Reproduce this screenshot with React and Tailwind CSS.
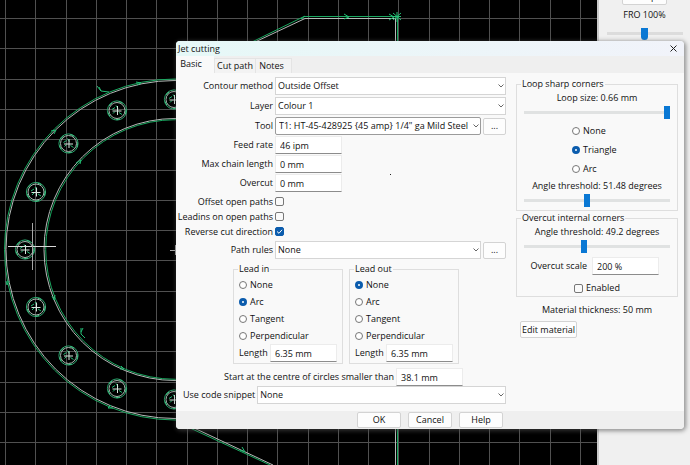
import React from 'react';
import clsx from 'clsx';

const GRID_X = Array.from({ length: 20 }, (_, i) => 5.7 + i * 30.25);
const GRID_Y = Array.from({ length: 15 }, (_, i) => 18.5 + i * 30.3);

const HOLES = [
  [174, 99.5],
  [117, 110.5],
  [68.5, 143.5],
  [36, 192],
  [25, 249.5],
  [36, 307],
  [68.5, 355.5],
  [117, 388.5],
  [174, 399.5],
];

const ARROWS = [
  'M51 131l5-1-2 4',
  'M136 82l5 1-4 2',
  'M76 163l5-3-1 4',
  'M6 281l1 4 2-4',
  'M52 296l2 4 1-5',
  'M113 408l-5 0 3-3',
  'M121 366l3 3-4 0',
  'M240 450l5 2-3-5',
  'M97 86l4 5 8 1M101 91l-2-4',
  'M81 328v6l4 4M81 332l2-4',
  'M344 14l5 3-5 2',
];

const Hole = ({ x, y }) => (
  <g transform={`translate(${x} ${y})`}>
    <circle r="9.6" stroke="#2ba36c" />
    <circle r="8" stroke="#a9b8b0" />
    <circle r="9" stroke="#45c98a" strokeDasharray="4 7" />
    <path d="M-5-1l3-2M-4 3l2-2M2 2l3 2M-1-5l2 3" stroke="#22bd74" />
    <path d="M-4.5 .5h9M.5-4.5v9" stroke="#d7e6dd" />
  </g>
);

const Drawing = () => (
  <svg
    className="absolute inset-0 h-full w-full"
    viewBox="0 0 597 465"
    preserveAspectRatio="xMinYMin slice"
    fill="none"
    aria-hidden="true"
  >
    <g stroke="#505050" strokeWidth="1">
      {GRID_X.map((x) => (
        <path key={x} d={`M${Math.floor(x) + 0.5} 0V465`} />
      ))}
      {GRID_Y.map((y) => (
        <path key={y} d={`M0 ${Math.floor(y) + 0.5}H597`} />
      ))}
    </g>

    {/* flange outline */}
    <g stroke="#b4bab7">
      <circle cx="175" cy="249.5" r="169" />
      <circle cx="175" cy="249.5" r="131" />
      <path d="M254 42.500L305 18.500H395.500V465" />
      <path d="M193 427.500L273 465" />
    </g>
    <g stroke="#1aa860">
      <circle cx="175" cy="249.500" r="170.500" />
      <circle cx="175.500" cy="249.500" r="129.800" />
      <path d="M252 42L304 16.500H397.500V465" />
      <path d="M190 428L270 465" />
    </g>
    <path d="M301 19l4-3M389 14l5 3-5 3M392 16.500h9M397 12v10M393 13l8 7M401 13l-8 7" stroke="#22bd74" />
    {ARROWS.map((d) => (
      <path key={d} d={d} stroke="#22bd74" />
    ))}
    {HOLES.map(([x, y]) => (
      <Hole key={`${x}-${y}`} x={x} y={y} />
    ))}

    {/* machine position and origin */}
    <path d="M8 246.500H56" stroke="#d8d8d8" />
    <path d="M32.500 223V270" stroke="#a8a8a8" />
    <path d="M170 250.500h10M175.500 245v10" stroke="#a8a8a8" />
  </svg>
);

const Select = ({ id, options, focused }) => (
  <div className="relative min-w-0 flex-1">
    <select
      id={id}
      className={clsx(
        'block h-[18px] w-full appearance-none border bg-white leading-4 outline-none',
        focused ? 'rounded-xs border-[#9b9b9b] pr-2 pl-[3px]' : 'border-[#d5d5d5] pr-3 pl-0.5'
      )}
    >
      {options.map((option) => (
        <option key={option}>{option}</option>
      ))}
    </select>
    <svg
      className="pointer-events-none absolute top-[7px] right-0.5 h-1 w-1.5"
      viewBox="0 0 6 4"
      fill="none"
      stroke="#666"
      aria-hidden="true"
    >
      <path d="M.5 .5L3 3L5.500 .5" />
    </svg>
  </div>
);

const TextInput = ({ id, value }) => (
  <input
    id={id}
    type="text"
    defaultValue={value}
    className="h-[18px] w-[67px] border border-[#ececec] border-b-[#8c8c8c] bg-white pl-1 outline-none"
  />
);

const Button = ({ className, children, ...props }) => (
  <button
    type="button"
    className={clsx('rounded-xs border border-[#d3d3d3] bg-[#fdfdfd] text-center', className)}
    {...props}
  >
    {children}
  </button>
);

const Row = ({ id, label, children }) => (
  <div className="flex h-[18px] items-center gap-0.5">
    <label htmlFor={id} className="w-[97px] text-right">
      {label}
    </label>
    {children}
  </div>
);

const Checkbox = ({ id, checked }) => (
  <span className="relative block h-[9px] w-[9px]">
    <input
      id={id}
      type="checkbox"
      defaultChecked={checked}
      className="peer block h-[9px] w-[9px] appearance-none rounded-xs border border-[#777] bg-[#fafafa] checked:border-[#0b5cad] checked:bg-[#0b5cad]"
    />
    <svg
      className="pointer-events-none absolute inset-0 hidden peer-checked:block"
      viewBox="0 0 9 9"
      fill="none"
      stroke="#fff"
      aria-hidden="true"
    >
      <path d="M2 4.500L4 6.300L7 2.800" />
    </svg>
  </span>
);

const CheckRow = ({ id, label, checked }) => (
  <div className="flex h-[15px] items-center gap-0.5">
    <label htmlFor={id} className="w-[97px] text-right">
      {label}
    </label>
    <Checkbox id={id} checked={checked} />
  </div>
);

const Radio = ({ name, label, checked, className }) => (
  <label className={clsx('flex items-center gap-[3px]', className)}>
    <input
      type="radio"
      name={name}
      defaultChecked={checked}
      className="h-2 w-2 appearance-none rounded-full border border-[#777] bg-white checked:border-[3px] checked:border-[#0b5cad]"
    />
    {label}
  </label>
);

const Slider = ({ value, label }) => (
  <input
    type="range"
    min="0"
    max="100"
    defaultValue={value}
    aria-label={label}
    className="block h-[15px] w-full appearance-none bg-transparent [&::-webkit-slider-runnable-track]:h-[3px] [&::-webkit-slider-runnable-track]:bg-[#e0e2e2] [&::-webkit-slider-thumb]:-mt-[5px] [&::-webkit-slider-thumb]:h-[13px] [&::-webkit-slider-thumb]:w-1.5 [&::-webkit-slider-thumb]:appearance-none [&::-webkit-slider-thumb]:bg-[#0a78d4]"
  />
);

const Group = ({ title, className, children }) => (
  <fieldset className={clsx('min-w-0 border border-[#dedede]', className)}>
    <legend className="ml-1 px-px leading-[14px]">{title}</legend>
    {children}
  </fieldset>
);

const LeadGroup = ({ title, name, selected }) => (
  <Group title={title} className="w-[110px] pb-px">
    <div className="pl-[5px]">
      {['None', 'Arc', 'Tangent', 'Perpendicular'].map((option) => (
        <Radio key={option} name={name} label={option} checked={option === selected} className="h-[17px]" />
      ))}
      <div className="flex items-center justify-between pr-[5px]">
        <label htmlFor={`${name}-length`}>Length</label>
        <TextInput id={`${name}-length`} value="6.35 mm" />
      </div>
    </div>
  </Group>
);

const BasicSettings = () => (
  <div className="min-w-0 flex-1">
    <div className="flex flex-col gap-0.5">
      <Row id="contour" label="Contour method">
        <Select id="contour" options={['Outside Offset', 'Inside Offset', 'No Offset']} />
      </Row>
      <Row id="layer" label="Layer">
        <Select id="layer" options={['Colour 1', 'Colour 2']} />
      </Row>
      <Row id="tool" label="Tool">
        <Select id="tool" options={['T1: HT-45-428925 {45 amp} 1/4" ga Mild Steel']} focused />
        <Button className="h-[17px] w-[23px]" aria-label="Edit tool">...</Button>
      </Row>
    </div>
    <div className="mt-px flex flex-col gap-px">
      <Row id="feed" label="Feed rate">
        <TextInput id="feed" value="46 ipm" />
      </Row>
      <Row id="chain" label="Max chain length">
        <TextInput id="chain" value="0 mm" />
        <span className="mt-5 ml-[46px] h-px w-px bg-[#222]" />
      </Row>
      <Row id="overcut" label="Overcut">
        <TextInput id="overcut" value="0 mm" />
      </Row>
    </div>
    <div className="my-0.5">
      <CheckRow id="offset-open" label="Offset open paths" />
      <CheckRow id="leadins-open" label="Leadins on open paths" />
      <CheckRow id="reverse" label="Reverse cut direction" checked />
    </div>
    <Row id="rules" label="Path rules">
      <Select id="rules" options={['None']} />
      <Button className="h-[17px] w-[23px]" aria-label="Edit path rules">...</Button>
    </Row>
    <div className="mt-[3px] flex gap-1.5 pl-[57px]">
      <LeadGroup title="Lead in" name="lead-in" selected="Arc" />
      <LeadGroup title="Lead out" name="lead-out" selected="None" />
    </div>
    <div className="mt-1 flex items-center gap-0.5 pl-12">
      <label htmlFor="circles">Start at the centre of circles smaller than</label>
      <TextInput id="circles" value="38.1 mm" />
    </div>
    <div className="flex items-center gap-0.5 pl-[7px]">
      <label htmlFor="snippet">Use code snippet</label>
      <Select id="snippet" options={['None']} />
    </div>
  </div>
);

const CornerSettings = () => (
  <div className="w-[162px] shrink-0">
    <Group title="Loop sharp corners" className="pb-0.5">
      <div className="px-[7px]">
        <p className="text-center">Loop size: 0.66 mm</p>
        <Slider value="100" label="Loop size" />
        <div className="my-px flex flex-col pl-12">
          <Radio name="loop" label="None" className="h-[19px]" />
          <Radio name="loop" label="Triangle" checked className="h-[19px]" />
          <Radio name="loop" label="Arc" className="h-[19px]" />
        </div>
        <p className="text-center">Angle threshold: 51.48 degrees</p>
        <Slider value="43" label="Loop angle threshold" />
      </div>
    </Group>
    <Group title="Overcut internal corners" className="pb-px">
      <div className="px-[7px]">
        <p className="text-center">Angle threshold: 49.2 degrees</p>
        <Slider value="41" label="Overcut angle threshold" />
        <div className="mt-[3px] flex items-center justify-end gap-[5px] pr-[11px]">
          <label htmlFor="scale">Overcut scale</label>
          <TextInput id="scale" value="200 %" />
        </div>
        <div className="mt-1.5 flex h-[14px] items-center justify-center gap-[3px]">
          <Checkbox id="enabled" />
          <label htmlFor="enabled">Enabled</label>
        </div>
      </div>
    </Group>
    <p className="mt-1.5 text-center">Material thickness: 50 mm</p>
    <Button className="mt-1 ml-1 h-[17px] px-px leading-[14px]">Edit material</Button>
  </div>
);

const Dialog = () => (
  <section
    role="dialog"
    aria-labelledby="dialog-title"
    className="absolute top-[41px] right-1.5 left-[176px] overflow-hidden rounded-sm bg-[#f9f9f9] shadow-[1px_1px_4px_1px_rgba(80,80,80,0.6)]"
  >
    <header className="flex h-[15px] items-center justify-between bg-gradient-to-r from-[#e6f8f7] to-[#f1f3fa] pr-[7px] pl-0.5">
      <h1 id="dialog-title">Jet cutting</h1>
      <button type="button" aria-label="Close">
        <svg className="h-[7px] w-[7px]" viewBox="0 0 7 7" stroke="#222" aria-hidden="true">
          <path d="M.5 .5L6.500 6.500M6.500 .5L.5 6.500" />
        </svg>
      </button>
    </header>
    <nav role="tablist" className="flex h-[17px] items-end bg-[#efefef]">
      <button type="button" role="tab" aria-selected="true" className="h-full w-[38px] bg-[#f9f9f9] pr-2 pb-0.5 text-center">
        Basic
      </button>
      <button type="button" role="tab" aria-selected="false" className="h-[15px] w-[42px] border border-b-0 border-[#e4e4e4] bg-[#f3f3f3] text-center">
        Cut path
      </button>
      <button type="button" role="tab" aria-selected="false" className="h-[15px] w-9 border border-b-0 border-l-0 border-[#e4e4e4] bg-[#f3f3f3] pr-1 text-center">
        Notes
      </button>
    </nav>
    <div className="flex gap-2.5 pt-1 pr-1.5 pb-[7px]">
      <BasicSettings />
      <CornerSettings />
    </div>
    <footer className="flex justify-center gap-[7px] bg-[#efefef] pt-px pb-px">
      <Button className="h-4 w-[44px]">OK</Button>
      <Button className="h-4 w-[44px]">Cancel</Button>
      <Button className="h-4 w-[44px]">Help</Button>
    </footer>
  </section>
);

const SidePanel = () => (
  <aside className="flex w-[93px] shrink-0 flex-col items-center overflow-hidden border-l-2 border-[#c9c9c9] bg-[#f0f0f0]">
    <Button className="-mt-3 h-[17px] w-[45px] leading-[15px]">Setup</Button>
    <label htmlFor="fro" className="mt-[3px]">FRO 100%</label>
    <input
      id="fro"
      type="range"
      defaultValue="50"
      className="mt-1 block h-[15px] w-[76px] appearance-none bg-transparent [&::-webkit-slider-runnable-track]:h-[3px] [&::-webkit-slider-runnable-track]:bg-[#dcdcdc] [&::-webkit-slider-thumb]:-mt-1 [&::-webkit-slider-thumb]:h-3 [&::-webkit-slider-thumb]:w-[7px] [&::-webkit-slider-thumb]:appearance-none [&::-webkit-slider-thumb]:rounded-b-full [&::-webkit-slider-thumb]:bg-[#0a78d4]"
    />
  </aside>
);

const App = () => {
  return (
    <main className="relative flex min-h-screen overflow-hidden bg-black font-['Open_Sans',sans-serif] text-[9px] leading-[14px] whitespace-nowrap text-[#111]">
      <div className="relative min-w-0 flex-1">
        <Drawing />
      </div>
      <SidePanel />
      <Dialog />
    </main>
  );
};

export default App;
